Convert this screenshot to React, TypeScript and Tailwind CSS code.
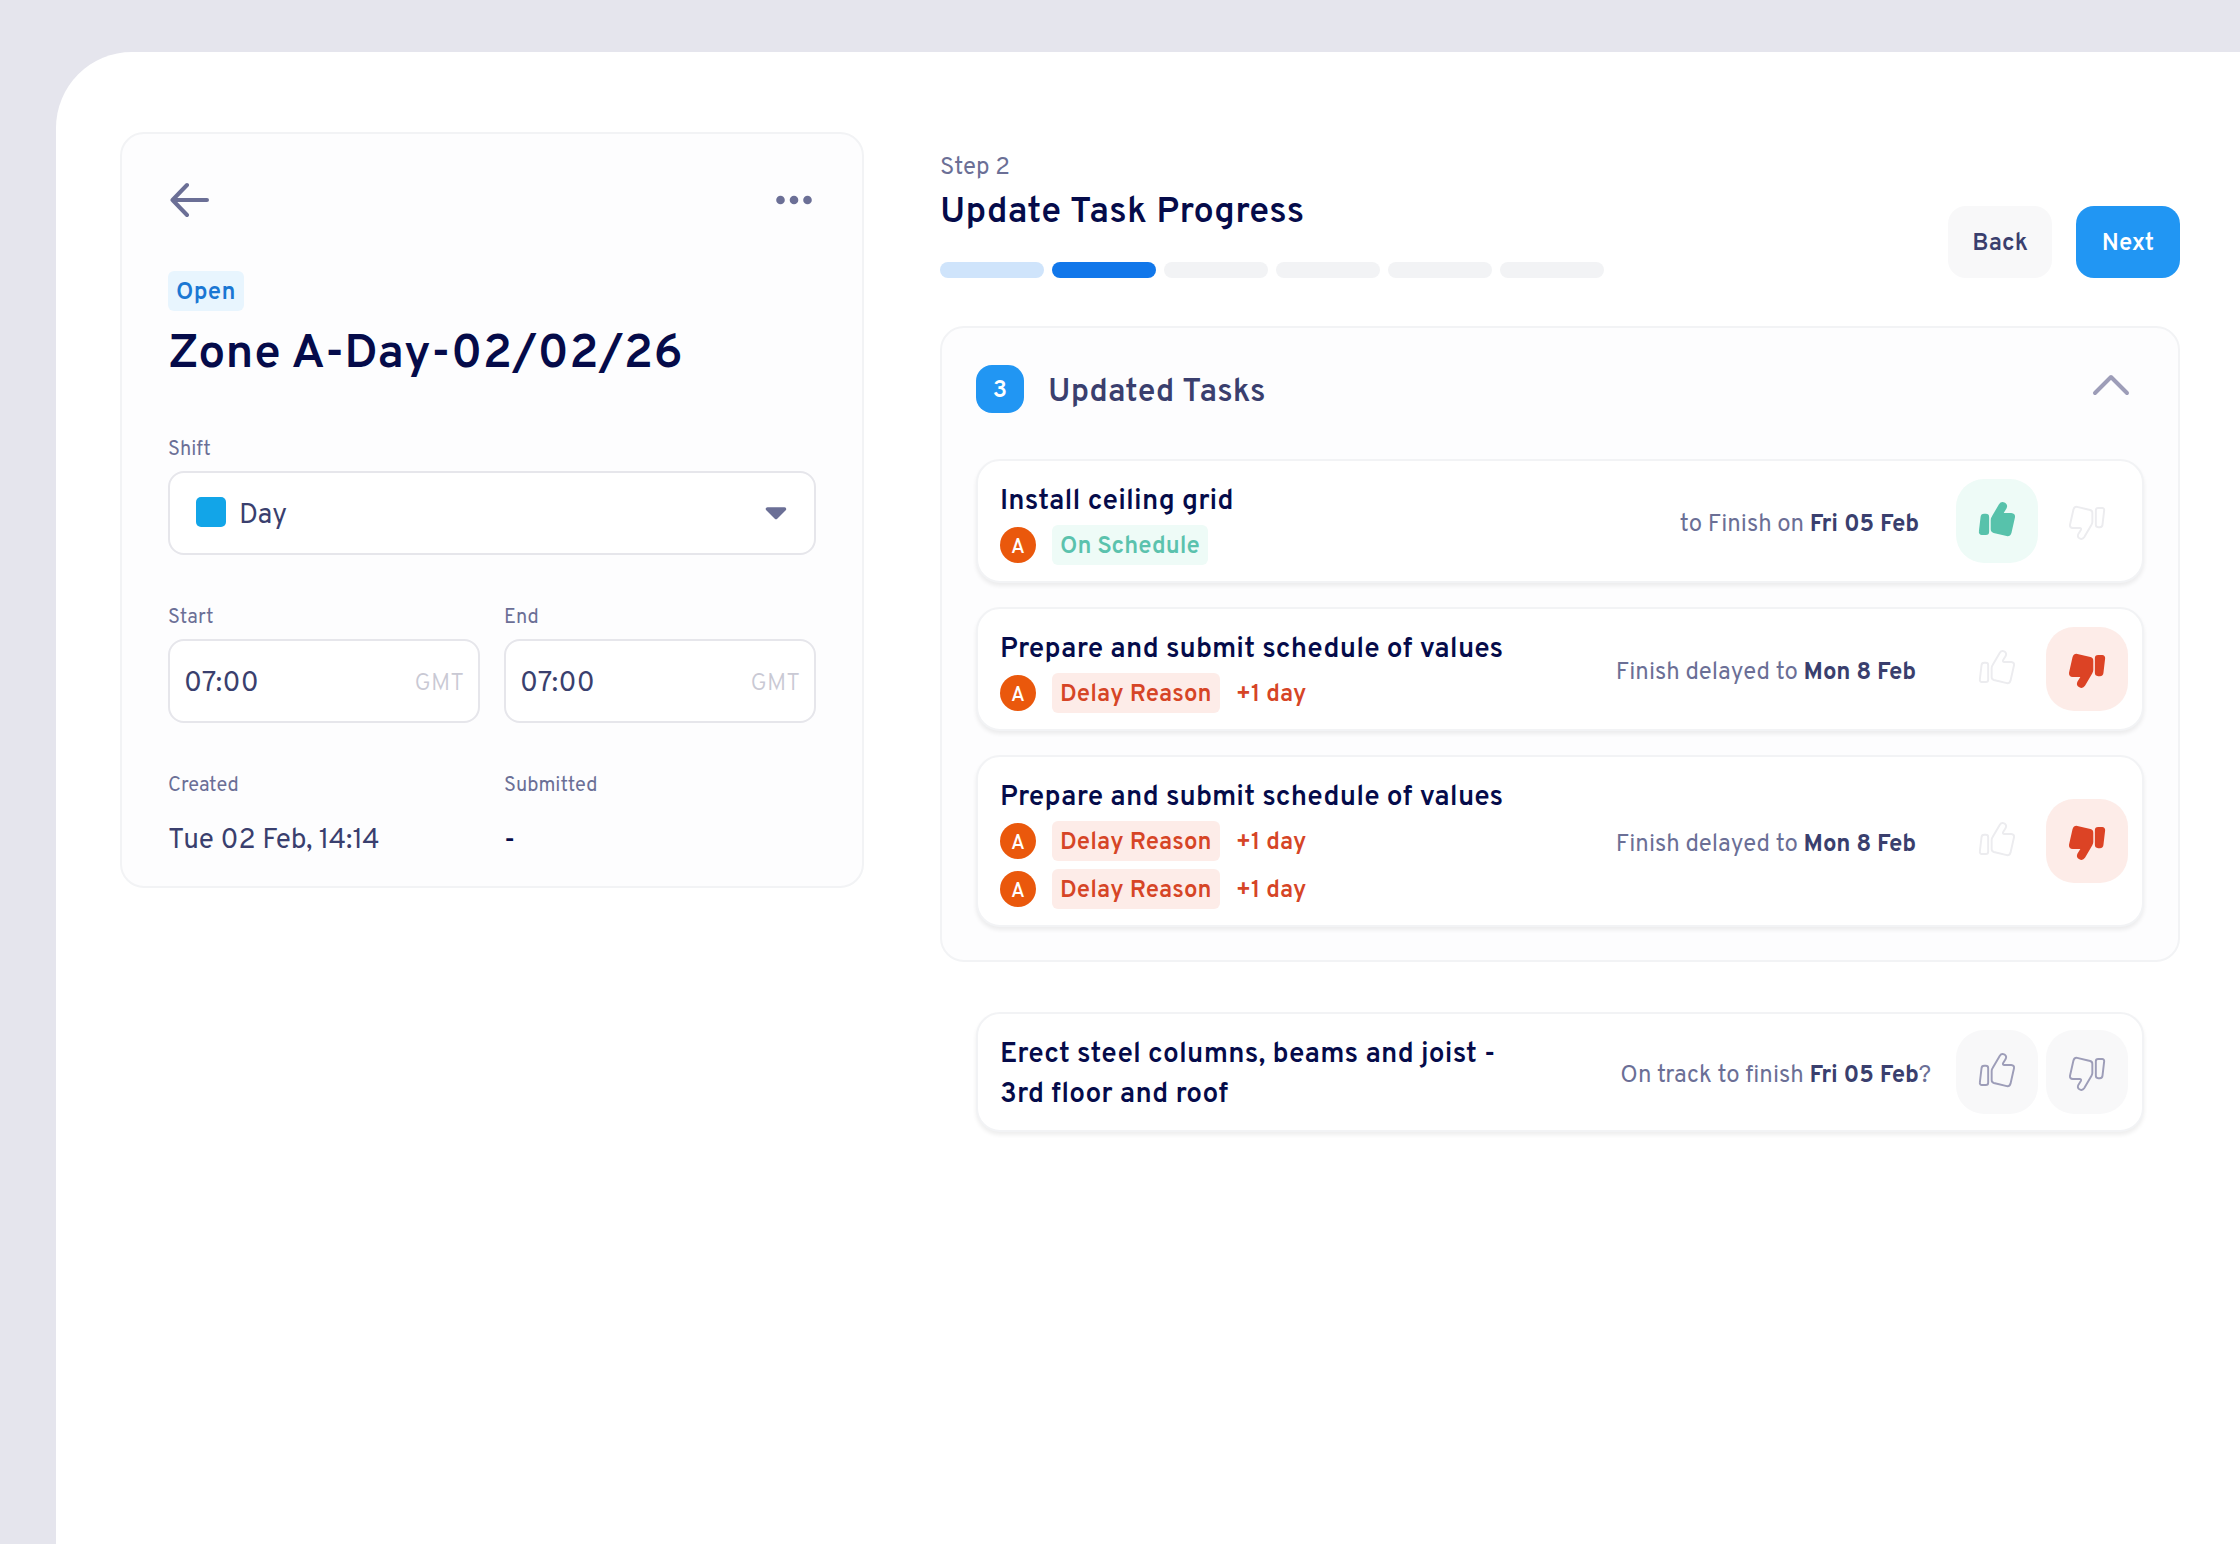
import clsx from "clsx";

interface ThumbProps {
    down?: boolean;
    filled?: boolean;
    className?: string;
}

const Thumb = (props: ThumbProps) => {
    const { down, filled, className } = props;

    return (
        <svg
            viewBox="111.5 93 120 120"
            className={clsx("size-10", down && "rotate-180", className)}
            fill={filled ? "currentColor" : "none"}
            stroke="currentColor"
            strokeWidth="5.8"
            strokeLinejoin="round"
        >
            <path d="M133 134.500h5a7 7 0 0 1 7 7V185a7 7 0 0 1-7 7H126a6 6 0 0 1-6-7l5-43a8 8 0 0 1 8-7.500z" />
            <path d="M155.500 150q0-4 2.500-8L180 104q4-6 10.500-4.500q8 2.500 8.500 8.500q0 3-2 7l-7 11q-1.500 3-.5 4.500q1 1.500 4 1.500H214q10 1 8.500 10L212 188q-3 9-11 7.500L162 186q-6.500-2-6.500-8z" />
        </svg>
    );
};

const Avatar = () => (
    <div className="mr-4 flex size-9 items-center justify-center rounded-full bg-[#ea580c] pt-[5px] text-[20px] leading-none font-medium text-white">
        A
    </div>
);

interface FieldProps {
    label: string;
    children: React.ReactNode;
}

const Field = (props: FieldProps) => {
    const { label, children } = props;

    return (
        <div className="flex-1">
            <div className="h-7 text-[20px] leading-8 text-[#6b6f96]">{label}</div>
            {children}
        </div>
    );
};

const TimeInput = () => (
    <div className="mt-[9px] flex h-[84px] items-center justify-between rounded-2xl border-2 border-[#e6e6eb] bg-white px-[14px] pt-1.5 text-[28px] text-[#3a3f6e]">
        <span className="tracking-[0.5px]">07:00</span>
        <span className="text-[24px] font-light text-[#c9c9d4]">GMT</span>
    </div>
);

interface TaskProps {
    title: string;
    note: string;
    date: string;
    suffix?: string;
    noteClass: string;
    state: "up" | "down" | "none";
    delays?: number;
}

const Task = (props: TaskProps) => {
    const { title, note, date, suffix, noteClass, state, delays = 0 } = props;

    return (
        <div className="flex items-center rounded-3xl border-2 border-[#f2f3f5] bg-white pr-[14px] pl-[22px] shadow-[0_3px_4px_rgba(0,0,0,0.07)]">
            <div className={clsx("w-[510px] pt-[21px]", state === "none" ? "pb-[15px]" : "pb-4")}>
                <div className="text-[28px] leading-10 font-semibold tracking-[0.18px] text-[#050b4a]">{title}</div>
                {state === "up" && (
                    <div className="mt-[3px] flex h-10 items-center">
                        <Avatar />
                        <div className="h-10 rounded-md bg-[#eefbf7] px-2 text-[24px] leading-[45px] font-semibold text-[#5bc2ad]">
                            On Schedule
                        </div>
                    </div>
                )}
                {delays > 0 && (
                    <div className="mt-[3px] space-y-2">
                        {Array.from({ length: delays }).map((_, i) => (
                            <div
                                key={i}
                                className="flex h-10 items-center text-[24px] leading-[45px] font-semibold text-[#d64526]"
                            >
                                <Avatar />
                                <div className="h-10 rounded-md bg-[#fdece8] px-2 tracking-[0.2px]">Delay Reason</div>
                                <div className="ml-4 h-10">+1 day</div>
                            </div>
                        ))}
                    </div>
                )}
            </div>
            <div className={clsx("ml-auto pt-[7px] text-[24px] whitespace-nowrap text-[#6b6f96]", noteClass)}>
                {note} <b className="font-bold tracking-[-0.1px] text-[#3a3f6e]">{date}</b>
                {suffix}
            </div>
            <div className="flex gap-2">
                <button
                    className={clsx(
                        "flex h-[84px] w-[82px] items-center justify-center rounded-[28px]",
                        state === "up" && "bg-[#eefbf7] text-[#57c2ab]",
                        state === "down" && "text-[#ececef]",
                        state === "none" && "bg-[#f8f8f9] text-[#9d9db8]",
                    )}
                >
                    <Thumb filled={state === "up"} />
                </button>
                <button
                    className={clsx(
                        "flex h-[84px] w-[82px] items-center justify-center rounded-[28px]",
                        state === "up" && "text-[#ececef]",
                        state === "down" && "bg-[#fdece8] text-[#dc4325]",
                        state === "none" && "bg-[#f8f8f9] text-[#9d9db8]",
                    )}
                >
                    <Thumb down filled={state === "down"} />
                </button>
            </div>
        </div>
    );
};

const ShiftCard = () => (
    <div className="h-[756px] w-[744px] rounded-3xl border-2 border-[#f2f3f5] bg-[#fdfdfe] px-[46px]">
        <div className="mt-12 flex h-9 items-center justify-between text-[#6b6f96]">
            <svg
                viewBox="0 0 40 36"
                className="ml-0.5 h-9 w-10"
                fill="none"
                stroke="currentColor"
                strokeWidth="4"
                strokeLinecap="round"
                strokeLinejoin="round"
            >
                <path d="M17 3L2.500 18L17 33M2.500 18H37" />
            </svg>
            <svg viewBox="0 0 36 10" className="mr-1 h-2.5 w-9" fill="currentColor">
                <circle cx="4.500" cy="5" r="4.300" />
                <circle cx="18" cy="5" r="4.300" />
                <circle cx="31.500" cy="5" r="4.300" />
            </svg>
        </div>
        <div className="mt-[53px] h-10 w-fit rounded-md bg-[#e8f5fe] px-2 text-[24px] leading-[45px] font-semibold tracking-[0.2px] text-[#1b77d3]">
            Open
        </div>
        <h1 className="mt-2.5 h-[60px] text-[48px] leading-[68px] font-semibold tracking-[0.4px] text-[#050b4a]">
            Zone A-Day-02/02/26
        </h1>
        <div className="mt-[53px] flex">
            <Field label="Shift">
                <div className="mt-[9px] flex h-[84px] items-center rounded-2xl border-2 border-[#e6e6eb] bg-white px-[26px] text-[28px] text-[#3a3f6e]">
                    <div className="mb-0.5 size-[30px] rounded-[5px] bg-[#12a5e8]" />
                    <span className="ml-[13px] pt-1.5">Day</span>
                    <svg viewBox="0 0 24 16" className="ml-auto h-4 w-6 text-[#6b6f96]">
                        <path
                            d="M3.500 4H20.500L12 12.500Z"
                            fill="currentColor"
                            stroke="currentColor"
                            strokeWidth="3.500"
                            strokeLinejoin="round"
                        />
                    </svg>
                </div>
            </Field>
        </div>
        <div className="mt-[47px] flex gap-6">
            <Field label="Start">
                <TimeInput />
            </Field>
            <Field label="End">
                <TimeInput />
            </Field>
        </div>
        <div className="mt-[47px] flex gap-6">
            <Field label="Created">
                <div className="mt-[23px] text-[28px] leading-10 text-[#3a3f6e]">Tue 02 Feb, 14:14</div>
            </Field>
            <Field label="Submitted">
                <div className="mt-[23px] text-[28px] leading-10 font-medium text-[#050b4a]">-</div>
            </Field>
        </div>
    </div>
);

const StepHeader = () => (
    <div className="flex items-end justify-between">
        <div className="pt-[22px]">
            <div className="text-[24px] leading-7 text-[#6b6f96]">Step 2</div>
            <h2 className="mt-[11px] text-[36px] leading-10 font-semibold tracking-[0.28px] text-[#050b4a]">
                Update Task Progress
            </h2>
            <div className="mt-[29px] flex gap-2">
                <div className="h-4 w-[104px] rounded-lg bg-[#cfe4fb]" />
                <div className="h-4 w-[104px] rounded-lg bg-[#1177ea]" />
                <div className="h-4 w-[104px] rounded-lg bg-[#f2f3f5]" />
                <div className="h-4 w-[104px] rounded-lg bg-[#f2f3f5]" />
                <div className="h-4 w-[104px] rounded-lg bg-[#f2f3f5]" />
                <div className="h-4 w-[104px] rounded-lg bg-[#f2f3f5]" />
            </div>
        </div>
        <div className="flex gap-6 text-[24px] font-semibold">
            <button className="h-[72px] w-[104px] rounded-[18px] bg-[#f8f8f9] pt-1 text-[#3a3f6e]">Back</button>
            <button className="h-[72px] w-[104px] rounded-[18px] bg-[#2196f3] pt-1 text-white">Next</button>
        </div>
    </div>
);

export default function App() {
    return (
        <div className="h-[1544px] w-[2240px] overflow-hidden bg-[#e5e5ed] pt-[52px] pl-14 font-['Overpass',Roboto,sans-serif]">
            <div className="flex h-full gap-[76px] rounded-tl-[76px] bg-white pt-20 pl-16">
                <ShiftCard />
                <div className="w-[1240px]">
                    <StepHeader />
                    <div className="mt-12 rounded-3xl border-2 border-[#f2f3f5] bg-[#fdfdfe] px-[34px] pt-[37px] pb-[33px]">
                        <div className="flex h-12 items-center">
                            <div className="size-12 rounded-2xl bg-[#2196f3] text-center text-[24px] leading-[53px] font-semibold text-white">
                                3
                            </div>
                            <div className="ml-6 pt-2 text-[32px] leading-[48px] font-semibold tracking-[0.2px] text-[#3a3f6e]">
                                Updated Tasks
                            </div>
                            <svg
                                viewBox="0 0 40 24"
                                className="mr-[13px] mb-2 ml-auto h-6 w-10"
                                fill="none"
                                stroke="#9d9db8"
                                strokeWidth="4"
                                strokeLinecap="round"
                                strokeLinejoin="round"
                            >
                                <path d="M4 20L20 4L36 20" />
                            </svg>
                        </div>
                        <div className="mt-[46px] space-y-6">
                            <Task
                                title="Install ceiling grid"
                                note="to Finish on"
                                date="Fri 05 Feb"
                                noteClass="mr-[37px]"
                                state="up"
                            />
                            <Task
                                title="Prepare and submit schedule of values"
                                note="Finish delayed to"
                                date="Mon 8 Feb"
                                noteClass="mr-[40px]"
                                state="down"
                                delays={1}
                            />
                            <Task
                                title="Prepare and submit schedule of values"
                                note="Finish delayed to"
                                date="Mon 8 Feb"
                                noteClass="mr-[40px]"
                                state="down"
                                delays={2}
                            />
                        </div>
                    </div>
                    <div className="mx-9 mt-[50px]">
                        <Task
                            title="Erect steel columns, beams and joist - 3rd floor and roof"
                            note="On track to finish"
                            date="Fri 05 Feb"
                            suffix="?"
                            noteClass="mr-[25px]"
                            state="none"
                        />
                    </div>
                </div>
            </div>
        </div>
    );
}
